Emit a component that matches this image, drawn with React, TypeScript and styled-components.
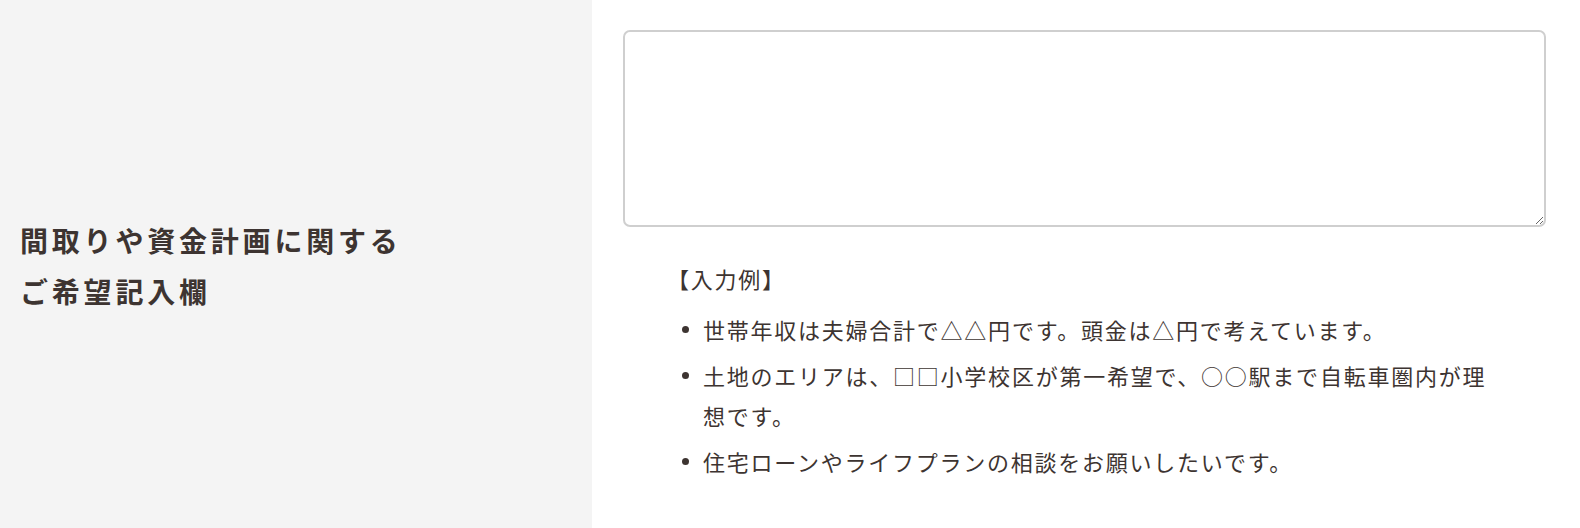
import React from 'react';
import styled, { createGlobalStyle } from 'styled-components';

const GlobalStyle = createGlobalStyle`
  html, body {
    margin: 0;
    padding: 0;
    background: #fff;
    overflow: hidden;
  }
  body {
    font-family: "Noto Sans CJK JP", "Noto Sans", sans-serif;
    color: #3d3431;
  }
`;

const FormRow = styled.div`
  display: grid;
  grid-template-columns: 592px 1fr;
  height: 528px;
`;

const LabelCell = styled.div`
  background: #f4f4f4;
  display: flex;
  align-items: center;
  padding: 0 20px;
`;

const Label = styled.div`
  font-size: 28px;
  font-weight: 700;
  line-height: 51px;
  letter-spacing: 3.8px;
  margin-top: 4px;
`;

const FieldCell = styled.div`
  display: flex;
  flex-direction: column;
  padding: 30px 34px 0 31px;
`;

const TextArea = styled.textarea`
  display: block;
  box-sizing: border-box;
  width: 100%;
  height: 197px;
  border: 2px solid #cfcfcf;
  border-radius: 7px;
  padding: 12px 16px;
  font-family: inherit;
  font-size: 20px;
  color: inherit;
  background: #fff;
  resize: vertical;
  outline: none;
`;

const Example = styled.div`
  margin-top: 31px;
  padding-left: 44px;
  width: 835px;
  font-size: 22px;
  line-height: 40px;
  letter-spacing: 0.08em;
`;

const ExampleTitle = styled.div`
  margin-bottom: 11px;
`;

const ExampleList = styled.ul`
  margin: 0;
  padding: 0 0 0 36px;
  list-style: none;
`;

const ExampleItem = styled.li`
  position: relative;
  & + & {
    margin-top: 6px;
  }
  &::before {
    content: '';
    position: absolute;
    left: -21px;
    top: 17px;
    width: 7px;
    height: 7px;
    border-radius: 50%;
    background: currentColor;
  }
`;

const examples = [
  '世帯年収は夫婦合計で△△円です。頭金は△円で考えています。',
  '土地のエリアは、□□小学校区が第一希望で、○○駅まで自転車圏内が理想です。',
  '住宅ローンやライフプランの相談をお願いしたいです。',
];

const App: React.FC = () => {
  return (
    <>
      <GlobalStyle />
      <FormRow>
        <LabelCell>
          <Label>
            間取りや資金計画に関する
            <br />
            ご希望記入欄
          </Label>
        </LabelCell>
        <FieldCell>
          <TextArea name="request" />
          <Example>
            <ExampleTitle>【入力例】</ExampleTitle>
            <ExampleList>
              {examples.map((text) => (
                <ExampleItem key={text}>{text}</ExampleItem>
              ))}
            </ExampleList>
          </Example>
        </FieldCell>
      </FormRow>
    </>
  );
};

export default App;
